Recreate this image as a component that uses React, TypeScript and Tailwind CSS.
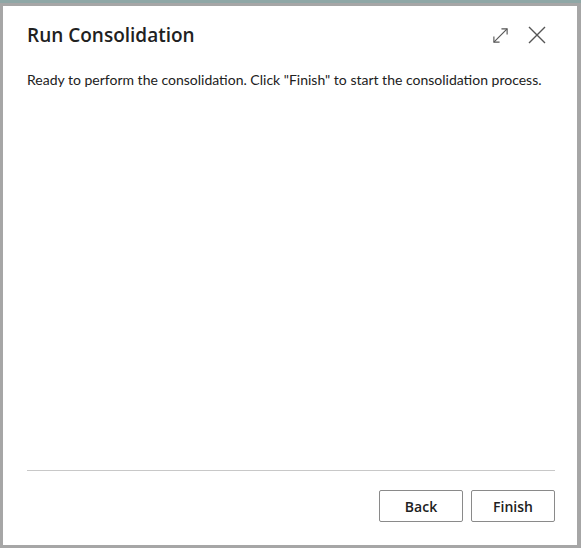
export default function App() {
  return (
    <div className="w-[581px] h-[548px] bg-[#a6a6a6] pt-[3px] pl-[3px] pr-[4px] pb-[3px] border-t-[3px] border-t-[#8fa7a6] flex" style={{ fontFamily: '"Open Sans", "Noto Sans", sans-serif' }}>
      <div className="flex-1 bg-white flex flex-col pl-6 pr-[22px] pt-[15px] pb-[23px] text-[#212121]">
        <div className="flex items-center justify-between">
          <h1 className="text-[19px] font-semibold leading-7">Run Consolidation</h1>
          <div className="flex items-center gap-[19px] mr-[9px] text-[#555]">
            <svg width="17" height="17" viewBox="0 0 18 18" fill="none" stroke="currentColor" strokeWidth="1.2">
              <path d="M2 16 L16 2" />
              <path d="M10 2 H16 V8" />
              <path d="M2 10 V16 H8" />
            </svg>
            <svg width="18" height="18" viewBox="0 0 18 18" fill="none" stroke="currentColor" strokeWidth="1.4">
              <path d="M1 1 L17 17 M17 1 L1 17" />
            </svg>
          </div>
        </div>
        <p className="mt-[21px] text-[14px] leading-5" style={{ fontFamily: 'Lato, "Open Sans", sans-serif' }}>
          Ready to perform the consolidation. Click "Finish" to start the consolidation process.
        </p>
        <div className="flex-1" />
        <div className="border-t border-[#c8c8c8]" />
        <div className="flex justify-end gap-2 mt-[19px]">
          <button className="w-[84px] h-[32px] border border-[#8a8a8a] rounded-[2px] text-[14px] font-semibold text-[#212121] bg-white">Back</button>
          <button className="w-[84px] h-[32px] border border-[#8a8a8a] rounded-[2px] text-[14px] font-semibold text-[#212121] bg-white">Finish</button>
        </div>
      </div>
    </div>
  );
}
